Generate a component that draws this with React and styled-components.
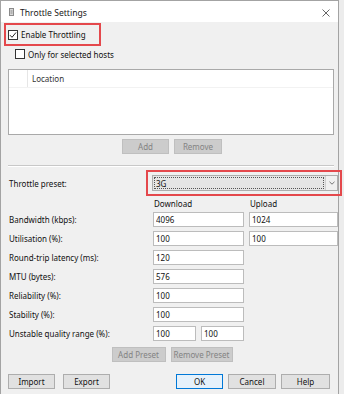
import styled, { createGlobalStyle } from "styled-components";

const Global = createGlobalStyle`
  html, body {
    margin: 0;
    padding: 0;
    background: #ececec;
    font-family: "Noto Sans", "Open Sans", sans-serif;
    font-size: 8px;
    color: #111;
  }
  * { box-sizing: border-box; }
`;

const rows = [
  { label: "Bandwidth (kbps):", down: "4096", up: "1024" },
  { label: "Utilisation (%):", down: "100", up: "100" },
  { label: "Round-trip latency (ms):", down: "120" },
  { label: "MTU (bytes):", down: "576" },
  { label: "Reliability (%):", down: "100" },
  { label: "Stability (%):", down: "100" },
];

const App = () => {
  return (
    <>
      <Global />
      <Window>
        <TitleBar>
          <TitleIcon width="5" height="8" viewBox="0 0 5 8">
            <rect x="0.5" y="0.5" width="4" height="7" fill="#d8d8d8" stroke="#8a8a8a" />
            <line x1="1.5" y1="3" x2="3.5" y2="3" stroke="#8a8a8a" />
            <line x1="1.5" y1="5" x2="3.5" y2="5" stroke="#8a8a8a" />
          </TitleIcon>
          <Title>Throttle Settings</Title>
          <Close width="8" height="8" viewBox="0 0 8 8">
            <path d="M0.5 0.5 L7.5 7.5 M7.5 0.5 L0.5 7.5" stroke="#555" strokeWidth="0.9" />
          </Close>
        </TitleBar>

        <Body>
          <Highlight $left>
            <CheckRow>
              <Box>
                <svg width="8" height="8" viewBox="0 0 8 8">
                  <path d="M1 4.2 L3 6.3 L7 1.5" fill="none" stroke="#222" strokeWidth="1" />
                </svg>
              </Box>
              <span>Enable Throttling</span>
            </CheckRow>
          </Highlight>

          <CheckRow $indent>
            <Box />
            <span>Only for selected hosts</span>
          </CheckRow>

          <HostList>
            <ListHeader>
              <HeaderGutter />
              <HeaderCell>Location</HeaderCell>
            </ListHeader>
          </HostList>

          <ButtonPair $top={4}>
            <Button disabled $w={47}>Add</Button>
            <Button disabled $w={48}>Remove</Button>
          </ButtonPair>

          <Separator />

          <Form>
            <Label>Throttle preset:</Label>
            <PresetCell>
              <Highlight>
                <Combo>
                  <ComboValue>3G</ComboValue>
                  <ComboArrow>
                    <svg width="6" height="4" viewBox="0 0 6 4">
                      <path d="M0.5 0.8 L3 3.2 L5.5 0.8" fill="none" stroke="#555" strokeWidth="0.8" />
                    </svg>
                  </ComboArrow>
                </Combo>
              </Highlight>
            </PresetCell>

            <span />
            <ColHead>Download</ColHead>
            <ColHead>Upload</ColHead>

            {rows.map((r) => (
              <FormRow key={r.label}>
                <Label>{r.label}</Label>
                <Field defaultValue={r.down} readOnly />
                {r.up ? <Field defaultValue={r.up} readOnly /> : <span />}
              </FormRow>
            ))}

            <FormRow>
              <Label>Unstable quality range (%):</Label>
              <SplitCell>
                <Field defaultValue="100" readOnly $w={43} />
                <Field defaultValue="100" readOnly $w={43} />
              </SplitCell>
              <span />
            </FormRow>
          </Form>

          <ButtonPair $top={2}>
            <Button disabled $w={54}>Add Preset</Button>
            <Button disabled $w={62}>Remove Preset</Button>
          </ButtonPair>

          <Footer>
            <Group>
              <Button $w={47}>Import</Button>
              <Button $w={47}>Export</Button>
            </Group>
            <Group $gap={5}>
              <Button $w={47} $primary>OK</Button>
              <Button $w={48}>Cancel</Button>
              <Button $w={49}>Help</Button>
            </Group>
          </Footer>
        </Body>
      </Window>
    </>
  );
};

const Window = styled.div`
  width: 339px;
  height: 394px;
  background: #f0f0f0;
  border: 1px solid #a3a3a3;
  border-bottom: none;
  display: flex;
  flex-direction: column;
`;

const TitleBar = styled.div`
  height: 21px;
  background: #fff;
  display: flex;
  align-items: center;
  padding: 0 0 0 8px;
`;

const TitleIcon = styled.svg`
  margin-top: 1px;
`;

const Title = styled.div`
  margin-left: 6px;
  font-size: 8.6px;
  color: #1a1a1a;
  margin-top: 3px;
`;

const Close = styled.svg`
  margin-left: auto;
  margin-right: 8px;
  margin-top: 3px;
`;

const Body = styled.div`
  flex: 1;
  padding: 1px 4px 0 7px;
  display: flex;
  flex-direction: column;
`;

const Highlight = styled.div`
  border: 2px solid #e4484c;
  padding: 2px;
  align-self: ${(p) => (p.$left ? "flex-start" : "stretch")};
  margin-left: ${(p) => (p.$left ? "-4px" : "0")};
  width: ${(p) => (p.$left ? "97px" : "auto")};
  height: ${(p) => (p.$left ? "23px" : "26px")};
  display: flex;
  align-items: center;
`;

const CheckRow = styled.div`
  display: flex;
  align-items: center;
  gap: 3px;
  height: 14px;
  margin-left: ${(p) => (p.$indent ? "7px" : "0")};
  margin-top: ${(p) => (p.$indent ? "1px" : "0")};
  white-space: nowrap;
`;

const Box = styled.span`
  width: 10px;
  height: 10px;
  border: 1px solid #333;
  background: #fff;
  display: inline-flex;
  align-items: center;
  justify-content: center;
`;

const HostList = styled.div`
  margin-top: 8px;
  height: 66px;
  background: #fff;
  border: 1px solid #a9a9a9;
`;

const ListHeader = styled.div`
  height: 18px;
  display: flex;
  border-bottom: 1px solid #f2f2f2;
`;

const HeaderGutter = styled.div`
  width: 19px;
  border-right: 1px solid #e6e6e6;
`;

const HeaderCell = styled.div`
  padding-left: 4px;
  display: flex;
  align-items: center;
  color: #333;
`;

const ButtonPair = styled.div`
  display: flex;
  justify-content: center;
  gap: 5px;
  margin-top: ${(p) => p.$top}px;
  padding-left: 2px;
`;

const Button = styled.button`
  width: ${(p) => p.$w}px;
  height: 15px;
  padding: 0;
  font-family: inherit;
  font-size: 8px;
  color: ${(p) => (p.disabled ? "#838383" : "#111")};
  background: ${(p) => (p.disabled ? "#cccccc" : p.$primary ? "#e5f1fb" : "#e1e1e1")};
  border: 1px solid ${(p) => (p.disabled ? "#bfbfbf" : p.$primary ? "#0078d7" : "#adadad")};
  display: flex;
  align-items: center;
  justify-content: center;
`;

const Separator = styled.div`
  height: 1px;
  background: #c8c8c8;
  margin-top: 11px;
  box-shadow: 0 1px 0 #fff;
`;

const Form = styled.div`
  display: grid;
  grid-template-columns: 140px 91px 89px;
  column-gap: 5px;
  row-gap: 4px;
  margin-top: 4px;
  align-items: center;
`;

const FormRow = styled.div`
  display: contents;
`;

const Label = styled.div`
  padding-left: 1px;
  white-space: nowrap;
`;

const PresetCell = styled.div`
  grid-column: 2 / 4;
  margin-left: -7px;
  margin-right: -4px;
`;

const Combo = styled.div`
  flex: 1;
  height: 16px;
  margin-left: 2px;
  border: 1px solid #adadad;
  background: #e5e5e5;
  display: flex;
  align-items: stretch;
`;

const ComboValue = styled.div`
  flex: 1;
  margin: 1px;
  border: 1px dotted #555;
  padding-left: 1px;
  display: flex;
  align-items: center;
`;

const ComboArrow = styled.div`
  width: 12px;
  display: flex;
  align-items: center;
  justify-content: center;
  background: #f0f0f0;
  border-left: 1px solid #d0d0d0;
`;

const ColHead = styled.div`
  padding-left: 1px;
  margin-top: -2px;
  margin-bottom: -1px;
`;

const Field = styled.input`
  width: ${(p) => (p.$w ? `${p.$w}px` : "100%")};
  height: 15px;
  border: 1px solid #bcbcbc;
  background: #fff;
  font-family: inherit;
  font-size: 8px;
  color: #111;
  padding: 0 2px;
  outline: none;
`;

const SplitCell = styled.div`
  display: flex;
  gap: 5px;
  grid-column: 2 / 4;
`;

const Footer = styled.div`
  display: flex;
  justify-content: space-between;
  margin-top: 12px;
  padding-right: 4px;
`;

const Group = styled.div`
  display: flex;
  gap: ${(p) => (p.$gap ? p.$gap : 8)}px;
`;

export default App;
